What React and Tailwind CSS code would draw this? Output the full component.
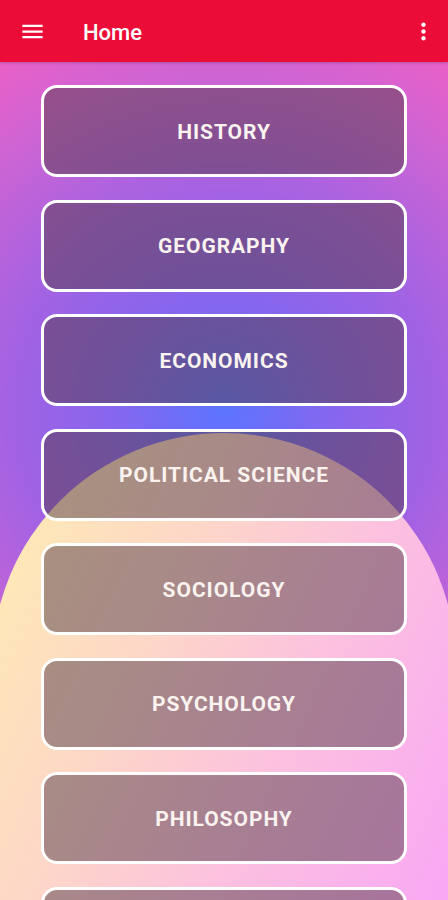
import React from "react";

const subjects = [
  "HISTORY",
  "GEOGRAPHY",
  "ECONOMICS",
  "POLITICAL SCIENCE",
  "SOCIOLOGY",
  "PSYCHOLOGY",
  "PHILOSOPHY",
  "ANTHROPOLOGY",
];

function MenuIcon() {
  return (
    <svg width="27" height="27" viewBox="0 0 24 24" fill="#fff">
      <path d="M3 18h18v-2H3v2zm0-5h18v-2H3v2zm0-7v2h18V6H3z" />
    </svg>
  );
}

function MoreIcon() {
  return (
    <svg width="27" height="27" viewBox="0 0 24 24" fill="#fff">
      <path d="M12 8c1.1 0 2-.9 2-2s-.9-2-2-2-2 .9-2 2 .9 2 2 2zm0 2c-1.1 0-2 .9-2 2s.9 2 2 2 2-.9 2-2-.9-2-2-2zm0 6c-1.1 0-2 .9-2 2s.9 2 2 2 2-.9 2-2-.9-2-2-2z" />
    </svg>
  );
}

export default function App() {
  return (
    <div className="relative flex h-[900px] w-[448px] flex-col overflow-hidden font-['Roboto',sans-serif]">
      {/* backdrop */}
      <div className="absolute inset-0 bg-[radial-gradient(circle_at_224px_410px,#5c74ff_0px,#8666ee_110px,#a462e2_220px,#cc64d4_330px,#f060c6_430px)]" />
      <div className="absolute left-[-8px] top-[433px] h-[480px] w-[464px] rounded-t-[232px] bg-[linear-gradient(115deg,#ffefb0_0%,#fdd8c6_35%,#fcc2de_62%,#f9a6f6_100%)]" />

      <header className="relative z-10 flex h-[62px] shrink-0 items-center bg-[#eb0d37] shadow-[0_1px_3px_rgba(0,0,0,0.2)]">
        <div className="ml-[19px] flex">
          <MenuIcon />
        </div>
        <h1 className="ml-[37px] pt-[3px] text-[22px] font-medium text-white">Home</h1>
        <div className="ml-auto mr-[11px] flex">
          <MoreIcon />
        </div>
      </header>

      <main className="relative flex flex-col gap-[22.5px] px-[41px] pt-[23px]">
        {subjects.map((s) => (
          <button
            key={s}
            className="flex h-[92px] shrink-0 items-center justify-center rounded-[16px] border-[3px] border-white bg-[#543c48]/50 pt-[3px] text-[21px] font-bold tracking-[0.045em] text-[#faf3ef]"
          >
            {s}
          </button>
        ))}
      </main>
    </div>
  );
}
